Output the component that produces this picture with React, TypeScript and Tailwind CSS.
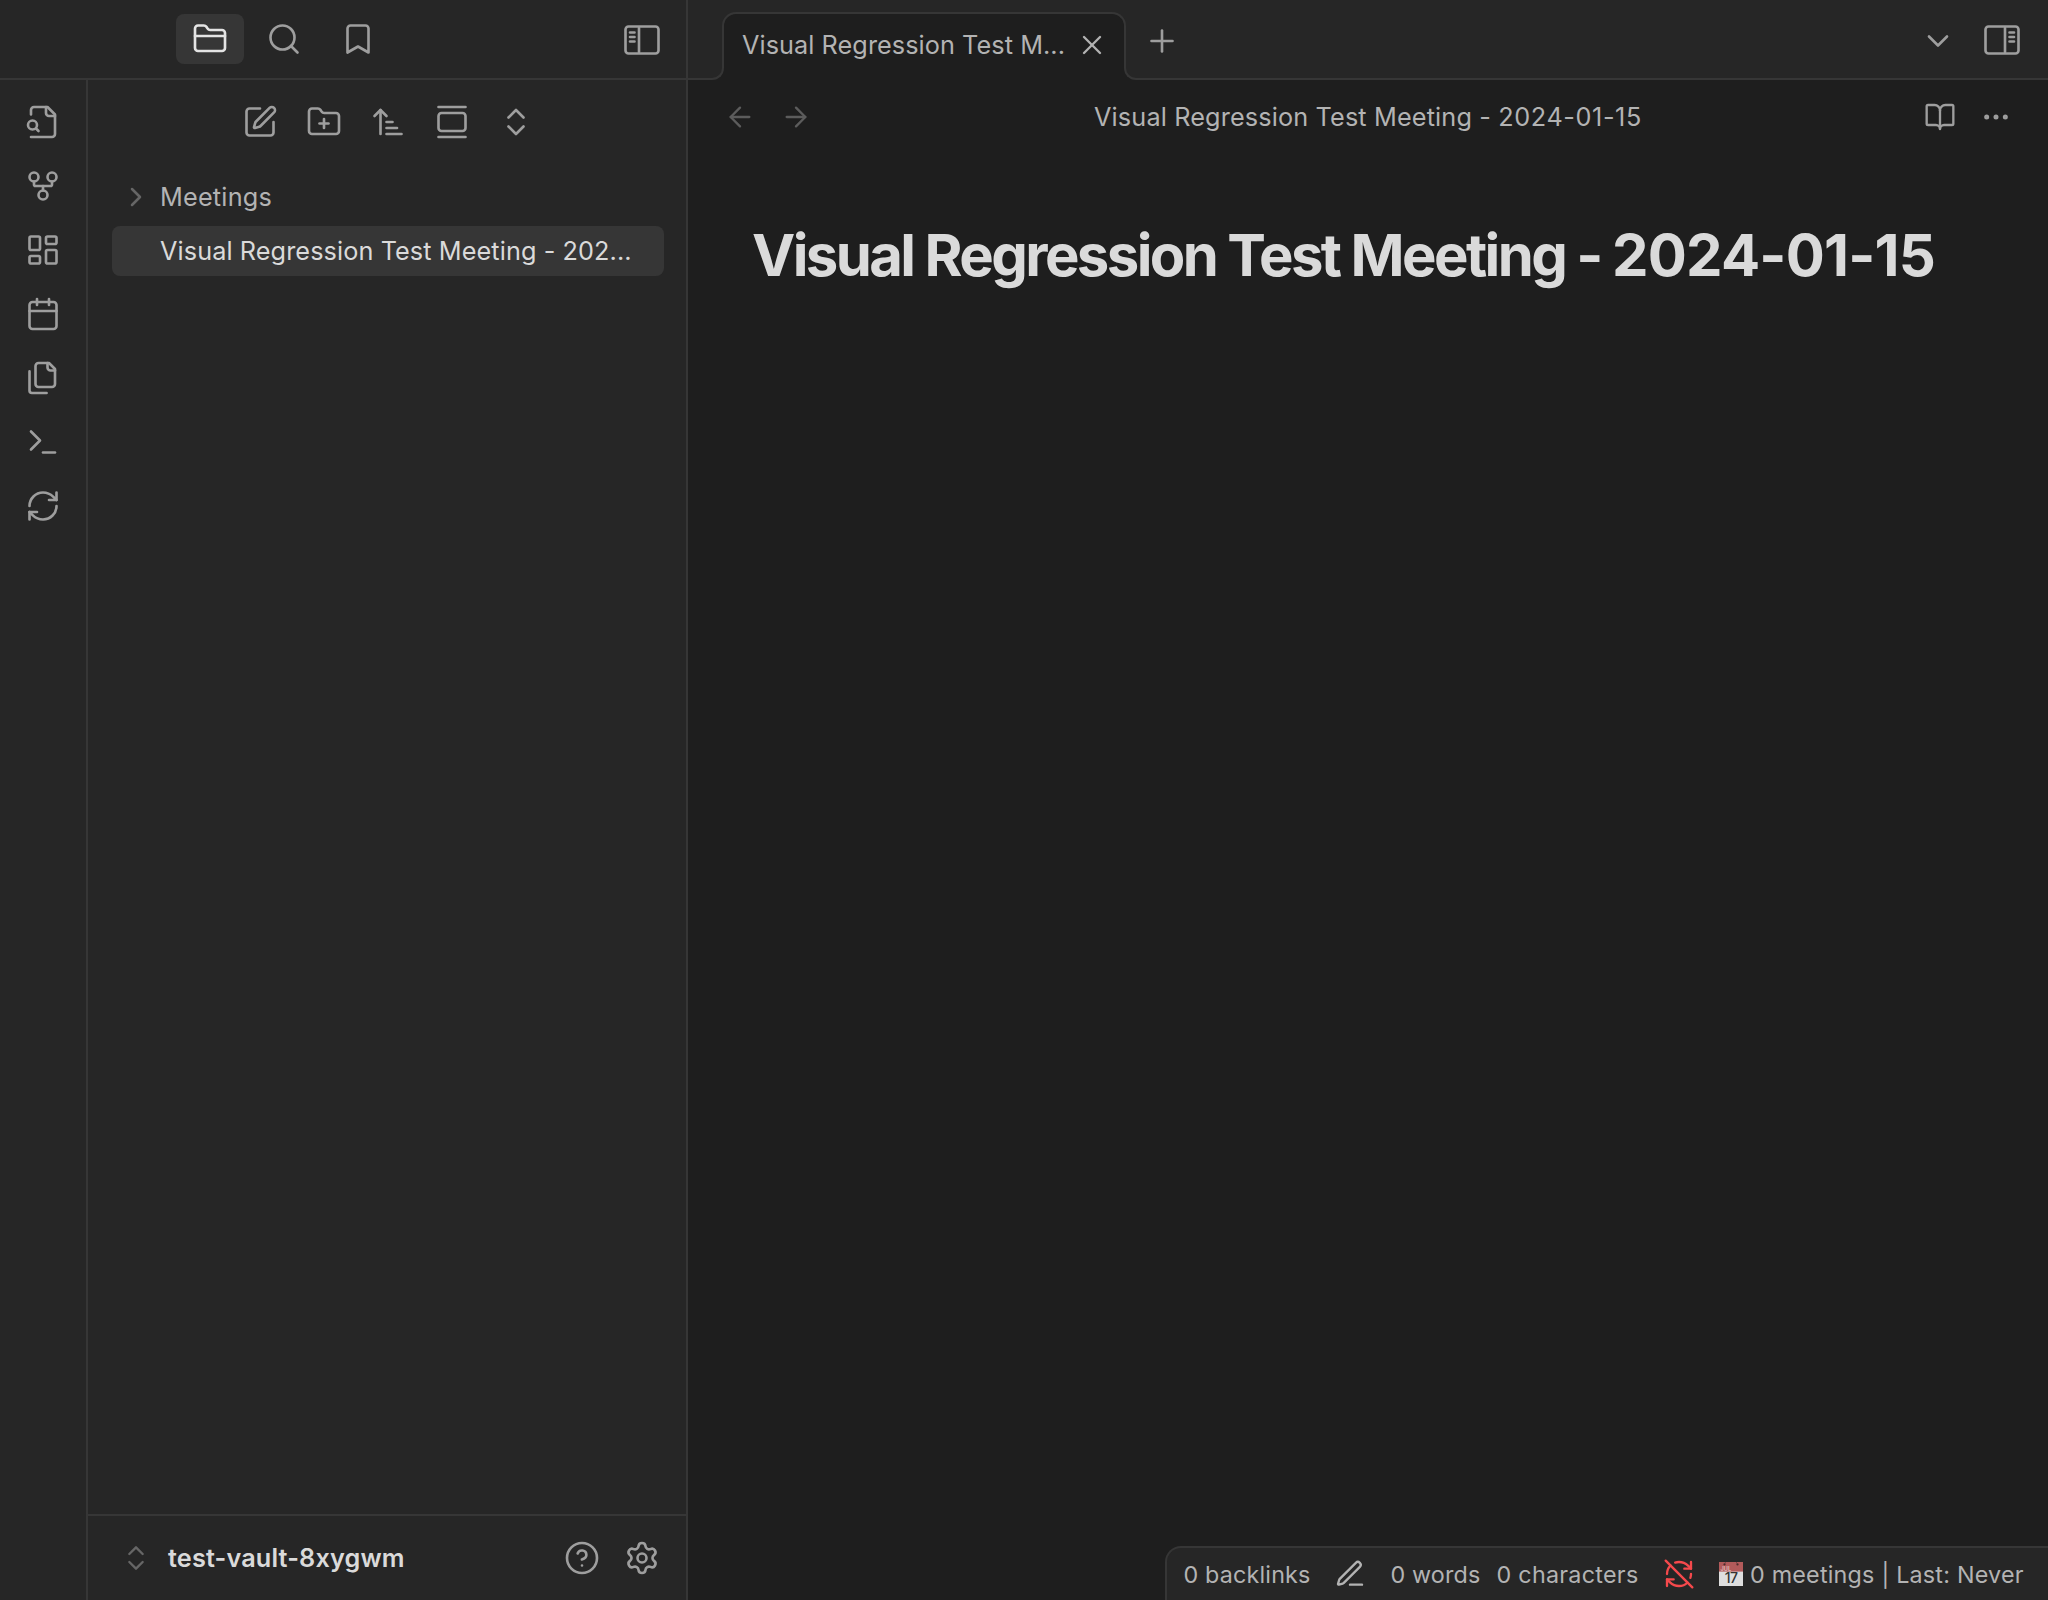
import type { ReactNode } from 'react';
import {
  ArrowLeft,
  ArrowRight,
  ArrowUpNarrowWide,
  Bookmark,
  Calendar,
  ChevronDown,
  ChevronRight,
  ChevronsUpDown,
  FolderClosed,
  FolderPlus,
  GalleryVertical,
  GitFork,
  LayoutDashboard,
  Plus,
  RefreshCw,
  RefreshCwOff,
  Search,
  Settings,
  X,
} from 'lucide-react';

function Glyph({ children, className = 'size-9' }: { children: ReactNode; className?: string }) {
  return (
    <svg
      viewBox="0 0 24 24"
      fill="none"
      stroke="currentColor"
      strokeWidth={1.75}
      strokeLinecap="round"
      strokeLinejoin="round"
      className={`${className} shrink-0`}
    >
      {children}
    </svg>
  );
}

const line = { strokeWidth: 1.75, className: 'size-9 shrink-0' };
const small = { strokeWidth: 1.75, className: 'size-8 shrink-0' };

function SidebarGlyph({ side }: { side: 'left' | 'right' }) {
  const x = side === 'left' ? 4 : 17;
  return (
    <Glyph>
      <rect x="1" y="3" width="22" height="18" rx="2" />
      <path d={side === 'left' ? 'M10 4v16' : 'M14 4v16'} />
      <path d={`M${x} 7h3M${x} 10h3M${x} 13h3`} />
    </Glyph>
  );
}

function CalendarEmoji() {
  return (
    <svg viewBox="0 0 24 24" className="ml-6 size-6 shrink-0">
      <rect width="24" height="24" fill="#dedede" />
      <rect width="24" height="9.6" fill="#b25a5a" />
      <circle cx="5.5" cy="2.4" r="1.1" fill="#4a2c2c" />
      <circle cx="18.5" cy="2.4" r="1.1" fill="#4a2c2c" />
      <path d="M5.5 2 6.6 0M18.5 2l-1.3-2" stroke="#6b4040" strokeWidth="0.8" />
      <text x="1.6" y="8.6" fontSize="5.6" fontWeight="700" fontFamily="Inter, sans-serif" fill="#dcb4b4">
        JUL
      </text>
      <text x="12" y="21.2" textAnchor="middle" fontSize="14" fontWeight="500" letterSpacing="-0.6" fontFamily="Inter, sans-serif" fill="#333333">
        17
      </text>
    </svg>
  );
}

function Ribbon() {
  return (
    <nav className="flex w-[88px] flex-col items-center gap-7 border-r-2 border-[#363636] pt-6">
      <Glyph>
        <path d="M4 22h14a2 2 0 0 0 2-2V7l-5-5H6a2 2 0 0 0-2 2v3" />
        <path d="M14 2v4a2 2 0 0 0 2 2h4" />
        <circle cx="5" cy="14" r="3" />
        <path d="m9 18-1.5-1.5" />
      </Glyph>
      <GitFork {...line} />
      <LayoutDashboard {...line} />
      <Calendar {...line} />
      <Glyph>
        <path d="M20 7h-3a2 2 0 0 1-2-2V2" />
        <path d="M9 18a2 2 0 0 1-2-2V4a2 2 0 0 1 2-2h7l4 4v10a2 2 0 0 1-2 2Z" />
        <path d="M3 7.6v12.8A1.6 1.6 0 0 0 4.6 22h9.8" />
      </Glyph>
      <Glyph>
        <path d="m4 17 6-6-6-6" />
        <path d="M12 19h8" />
      </Glyph>
      <RefreshCw {...line} />
    </nav>
  );
}

function FileExplorer() {
  return (
    <section className="flex flex-1 flex-col">
      <div className="flex gap-7 pt-6 pl-[154px] text-[#9e9e9e]">
        <Glyph>
          <path d="M12 3H5a2 2 0 0 0-2 2v14a2 2 0 0 0 2 2h14a2 2 0 0 0 2-2v-7" />
          <path d="M18.375 2.625a1 1 0 0 1 3 3l-9.013 9.014a2 2 0 0 1-.853.505l-2.873.84a.5.5 0 0 1-.62-.62l.84-2.873a2 2 0 0 1 .506-.852z" />
        </Glyph>
        <FolderPlus {...line} />
        <ArrowUpNarrowWide {...line} />
        <GalleryVertical {...line} />
        <ChevronsUpDown {...line} />
      </div>
      <div className="mt-8 mr-[22px] ml-6 flex flex-1 flex-col gap-1">
        <div className="flex h-[50px] items-center pl-2">
          <ChevronRight strokeWidth={1.9} className="size-8 shrink-0 text-[#666666]" />
          <span className="ml-2 pt-0.5 tracking-[0.2px]">Meetings</span>
        </div>
        <div className="flex h-[50px] items-center rounded-lg bg-[#363636] pl-12 text-[#dadada]">
          <span className="pt-0.5 tracking-[0.09px]">Visual Regression Test Meeting - 202...</span>
        </div>
      </div>
      <footer className="flex h-[86px] items-center border-t-2 border-[#363636] pr-[26px] pl-8">
        <ChevronsUpDown strokeWidth={1.75} className="size-8 shrink-0 text-[#666666]" />
        <span className="ml-4 flex-1 pt-0.5 font-semibold tracking-[0.15px] text-[#dadada]">test-vault-8xygwm</span>
        <div className="flex gap-6 text-[#9e9e9e]">
          <Glyph>
            <circle cx="12" cy="12" r="10" />
            <path d="M9.09 9a3 3 0 0 1 5.83 1c0 2-3 3-3 3M12 17h.01" />
          </Glyph>
          <Settings {...line} />
        </div>
      </footer>
    </section>
  );
}

function TabBar() {
  return (
    <div className="flex h-20 shrink-0 items-start border-b-2 border-[#363636] bg-[#262626] pl-[34px] text-[#9e9e9e]">
      <div className="relative mt-3 flex h-[68px] w-[404px] items-center justify-between rounded-t-[14px] border-2 border-b-0 border-[#363636] bg-[#1e1e1e] pr-4 pb-1 pl-[18px] text-[#b3b3b3]">
        <span className="pt-0.5 tracking-[0.06px]">Visual Regression Test M...</span>
        <X {...small} />
        <div className="absolute bottom-0 -left-3.5 size-3.5 bg-[#1e1e1e]">
          <div className="size-full rounded-br-[12px] border-r-2 border-b-2 border-[#363636] bg-[#262626]" />
        </div>
        <div className="absolute -right-3.5 bottom-0 size-3.5 bg-[#1e1e1e]">
          <div className="size-full rounded-bl-[12px] border-b-2 border-l-2 border-[#363636] bg-[#262626]" />
        </div>
      </div>
      <div className="mt-[23px] ml-[18px]">
        <Plus {...line} />
      </div>
      <div className="mt-[22px] mr-7 ml-auto flex gap-7">
        <div className="pt-px">
          <ChevronDown {...line} />
        </div>
        <SidebarGlyph side="right" />
      </div>
    </div>
  );
}

function StatusBar() {
  return (
    <div className="flex h-[54px] w-[883px] items-center self-end rounded-tl-2xl border-t-2 border-l-2 border-[#363636] bg-[#262626] pl-[16.5px] text-[23.3px] whitespace-nowrap">
      <span className="w-[127px] pt-0.5 tracking-[0.18px]">0 backlinks</span>
      <Glyph className="ml-[23px] size-8">
        <path d="M12 20h9" />
        <path d="M16.376 3.622a1 1 0 0 1 3.002 3.002L7.368 18.635a2 2 0 0 1-.855.506l-2.872.838a.5.5 0 0 1-.62-.62l.838-2.872a2 2 0 0 1 .506-.854z" />
      </Glyph>
      <span className="ml-[25px] w-[90px] pt-0.5 tracking-[0.15px]">0 words</span>
      <span className="ml-4 w-[143px] pt-0.5 tracking-[0.28px]">0 characters</span>
      <RefreshCwOff strokeWidth={1.75} className="ml-[23px] size-8 shrink-0 text-[#f5494c]" />
      <CalendarEmoji />
      <span className="ml-[7.5px] pt-0.5 tracking-[0.22px]">0 meetings | Last: Never</span>
    </div>
  );
}

export default function App() {
  return (
    <div className="flex h-[1600px] w-[2048px] overflow-hidden bg-[#1e1e1e] font-['Inter',sans-serif] text-[25.25px] leading-none font-[430] whitespace-nowrap text-[#b3b3b3]">
      <aside className="flex w-[688px] shrink-0 flex-col border-r-2 border-[#363636] bg-[#262626]">
        <header className="flex h-20 items-center border-b-2 border-[#363636] pr-[26px] pl-44 text-[#9e9e9e]">
          <div className="flex gap-1.5">
            <div className="flex h-[50px] w-[68px] items-center justify-center rounded-lg bg-[#363636] text-[#e4e4e4]">
              <FolderClosed {...line} />
            </div>
            <div className="flex h-[50px] w-[68px] items-center justify-center">
              <Search {...line} />
            </div>
            <div className="flex h-[50px] w-[68px] items-center justify-center">
              <Bookmark {...line} />
            </div>
          </div>
          <div className="ml-auto pt-0.5">
            <SidebarGlyph side="left" />
          </div>
        </header>
        <div className="flex flex-1">
          <div className="flex text-[#9e9e9e]">
            <Ribbon />
          </div>
          <FileExplorer />
        </div>
      </aside>
      <main className="flex flex-1 flex-col">
        <TabBar />
        <div className="flex h-[74px] items-center justify-between px-9">
          <div className="flex gap-6 text-[#5c5c5c]">
            <ArrowLeft {...small} />
            <ArrowRight {...small} />
          </div>
          <span className="pt-0.5 tracking-[0.14px]">
            Visual Regression Test Meeting - <span className="tracking-[0.6px]">2024-01-15</span>
          </span>
          <div className="flex gap-6 text-[#9e9e9e]">
            <Glyph className="size-8">
              <path d="M12 7v14" />
              <path d="M3 18a1 1 0 0 1-1-1V4a1 1 0 0 1 1-1h5a4 4 0 0 1 4 4 4 4 0 0 1 4-4h5a1 1 0 0 1 1 1v13a1 1 0 0 1-1 1h-6a3 3 0 0 0-3 3 3 3 0 0 0-3-3z" />
            </Glyph>
            <Glyph className="size-8">
              <circle cx="12" cy="12" r="1" />
              <circle cx="19" cy="12" r="1" />
              <circle cx="5" cy="12" r="1" />
            </Glyph>
          </div>
        </div>
        <div className="flex-1 pt-[66px] pl-16">
          <h1 className="text-[58px] leading-[70px] font-bold tracking-[-2.6px] text-[#dadada]">
            Visual Regression Test Meeting - <span className="tracking-[-0.8px]">2024-01-15</span>
          </h1>
        </div>
        <StatusBar />
      </main>
    </div>
  );
}
